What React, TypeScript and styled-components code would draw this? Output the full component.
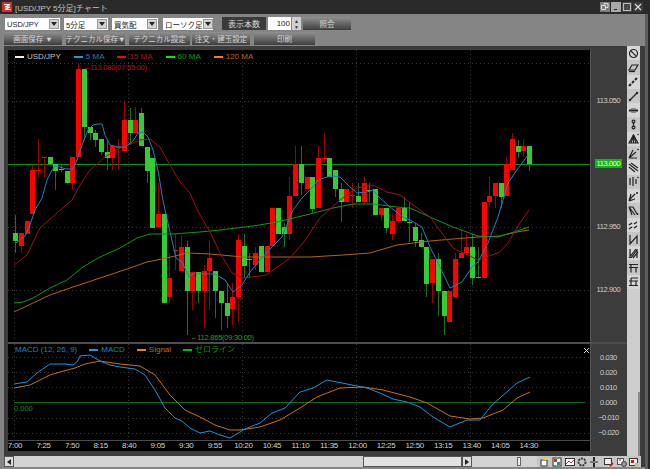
import React from 'react'
import styled, { createGlobalStyle } from 'styled-components'

const GlobalStyle = createGlobalStyle`
  html, body { margin: 0; padding: 0; background: #222; }
  body { font-family: "Liberation Sans", "Noto Sans CJK JP", sans-serif; }
`

const JP = `"Liberation Sans", "Noto Sans CJK JP", sans-serif`

const Window = styled.div`
  width: 650px;
  height: 469px;
  background: #262626;
  overflow: hidden;
  display: flex;
  flex-direction: column;
`

const TitleBar = styled.div`
  height: 14px;
  flex: none;
  display: flex;
  align-items: center;
  padding: 0 7px 0 2px;
  background: #2a2a2a;
  color: #c4c4c4;
  font-size: 8px;
`

const TitleText = styled.span`
  margin-left: 3px;
  flex: 1;
`

const WinBtn = styled.div<{ $bg: string }>`
  width: 10px;
  height: 10px;
  margin-left: 1px;
  background: ${({ $bg }) => $bg};
  display: flex;
  align-items: center;
  justify-content: center;
`

const Content = styled.div`
  width: 648px;
  box-sizing: border-box;
  border-right: 3px solid #5c5c5c;
  flex: 1;
  display: flex;
  flex-direction: column;
  background: #858585;
`

const Toolbar = styled.div`
  height: 32px;
  flex: none;
  padding: 3px 0 0 4px;
  box-sizing: border-box;
  display: flex;
  flex-direction: column;
  gap: 2px;
`

const ToolRow = styled.div`
  display: flex;
  height: 13px;
  align-items: stretch;
`

const SelectBox = styled.div<{ $w: number; $gap: number }>`
  width: ${({ $w }) => $w}px;
  margin-left: ${({ $gap }) => $gap}px;
  margin-top: 1px;
  box-sizing: border-box;
  background: #fff;
  color: #222;
  font-size: 7.5px;
  white-space: nowrap;
  display: flex;
  align-items: center;
  justify-content: space-between;
  padding: 0 1px 0 2px;
`

const SelectArrow = styled.span`
  width: 10px;
  height: 10px;
  flex: none;
  background: #d4d4d4;
  border: 1px solid #999;
  box-sizing: border-box;
  display: flex;
  align-items: center;
  justify-content: center;
`

const CountLabel = styled.div`
  width: 44px;
  margin-left: 9px;
  background: #3a3a3a;
  color: #d8d8d8;
  font-size: 8px;
  display: flex;
  align-items: center;
  justify-content: center;
`

const Spinner = styled.div`
  width: 33px;
  margin-left: 2px;
  display: flex;
  gap: 1px;
`

const SpinValue = styled.div`
  flex: 1;
  background: #fff;
  color: #222;
  font-size: 8px;
  display: flex;
  align-items: center;
  justify-content: flex-end;
  padding-right: 1px;
`

const SpinArrows = styled.div`
  width: 9px;
  background: #d0d0d0;
  color: #333;
  font-size: 5px;
  line-height: 6px;
  display: flex;
  flex-direction: column;
  align-items: center;
  justify-content: center;
`

const GradButton = styled.div<{ $w: number; $gap: number }>`
  width: ${({ $w }) => $w}px;
  margin-left: ${({ $gap }) => $gap}px;
  background: linear-gradient(#909090, #3e3e3e);
  color: #d8d8d8;
  font-size: 7.5px;
  font-family: ${JP};
  display: flex;
  align-items: center;
  justify-content: center;
  white-space: nowrap;
`

const Workspace = styled.div`
  width: 641px;
  height: 421px;
  margin-left: 4px;
  flex: none;
  display: flex;
  flex-direction: column;
  background: #3c3c3c;
`

const MainRow = styled.div`
  height: 410px;
  flex: none;
  display: flex;
  padding: 0 4px 0 4px;
  box-sizing: border-box;
`

const ChartGrid = styled.div`
  margin-top: 4px;
  display: grid;
  grid-template-columns: 582px 37px;
  grid-template-rows: 292px 2px 96px 1px 10px;
  width: 619px;
  height: 401px;
`

const Plot = styled.div`
  position: relative;
  background: #000;
  border-right: 1px solid #555;
  margin-right: -1px;
  svg { display: block; }
`

const PlotDivider = styled.div<{ $full?: boolean }>`
  background: #4c4c4c;
  grid-column: ${({ $full }) => ($full ? '1' : '1 / span 2')};
`

const Legend = styled.div<{ $top: number }>`
  position: absolute;
  top: ${({ $top }) => $top}px;
  left: 7px;
  display: flex;
  align-items: center;
  font-size: 8px;
  line-height: 10px;
  white-space: nowrap;
`

const LegendItem = styled.span<{ $text: string; $gap: number }>`
  display: flex;
  align-items: center;
  gap: 3px;
  color: ${({ $text }) => $text};
  margin-right: ${({ $gap }) => $gap}px;
`

const Swatch = styled.i<{ $c: string }>`
  width: 9px;
  height: 2px;
  background: ${({ $c }) => $c};
`

const AxisColumn = styled.div<{ $pad: number }>`
  padding-top: ${({ $pad }) => $pad}px;
  box-sizing: border-box;
`

const Tick = styled.div<{ $h: number }>`
  height: ${({ $h }) => $h}px;
  display: flex;
  align-items: center;
  justify-content: center;
  color: #cfcfcf;
  font-size: 7.5px;
  letter-spacing: -0.4px;
`

const PriceTag = styled.span`
  width: 27px;
  height: 9px;
  background: #12b512;
  color: #e8ffe8;
  font-size: 7.5px;
  line-height: 9px;
  text-align: center;
`

const XAxisCell = styled.div`
  grid-column: 1;
  background: #000;
  overflow: hidden;
  display: flex;
  border-right: 1px solid #555;
  margin-right: -1px;
`

const XAxisRow = styled.div`
  display: flex;
  margin-left: -7.25px;
  flex: none;
`

const XLabel = styled.span`
  width: 28.55px;
  flex: none;
  text-align: center;
  color: #d4d4d4;
  font-size: 8px;
  line-height: 10px;
  letter-spacing: -0.3px;
`

const SideTools = styled.div`
  width: 13px;
  flex: none;
  position: relative;
  background: #cdcdcd;
  display: flex;
  flex-direction: column;
`

const SideCell = styled.div`
  height: 14.3px;
  flex: none;
  display: flex;
  align-items: center;
  justify-content: center;
  background: #d6d6d6;
  &:nth-child(even) { background: #c6c6c6; }
  svg { display: block; }
`

const SideSliver = styled.span`
  position: absolute;
  right: 0;
  top: 346px;
  width: 2px;
  height: 64px;
  background: #8c8c8c;
`

const BottomBar = styled.div`
  height: 11px;
  flex: none;
  margin-right: 4px;
  display: flex;
  background: #d2d2d2;
`

const ScrollBtn = styled.div`
  width: 10px;
  box-sizing: border-box;
  border: 1px solid #555;
  background: #dcdcdc;
  display: flex;
  align-items: center;
  justify-content: center;
`

const ScrollTrack = styled.div<{ $w: number }>`
  width: ${({ $w }) => $w}px;
  position: relative;
`

const ScrollThumb = styled.div`
  width: 99px;
  box-sizing: border-box;
  border: 1px solid #555;
  background: #e2e2e2;
`

const ZoomKnob = styled.span`
  position: absolute;
  left: 45px;
  top: 1px;
  width: 4px;
  height: 9px;
  box-sizing: border-box;
  border: 1px solid #666;
  background: #eee;
`

const BottomIcons = styled.div`
  flex: 1;
  display: flex;
  align-items: center;
  padding-left: 2px;
  background: #c6c6c6;
`

const BottomIcon = styled.div<{ $gap: number }>`
  width: 10px;
  height: 10px;
  margin-right: ${({ $gap }) => $gap}px;
  svg { display: block; }
`

type C = [number, number, number, number, 'r' | 'g']

const candles: C[] = [
  [233, 241, 215, 253, 'g'], [233, 246, 233, 253, 'r'], [221, 234, 221, 234, 'r'], [170, 214, 165, 214, 'r'],
  [170, 171, 139, 177, 'r'], [157, 158, 157, 177, 'r'], [157, 164, 157, 164, 'g'], [164, 171, 164, 190, 'g'],
  [169, 170, 164, 172, 'g'], [171, 183, 171, 183, 'g'], [157, 183, 157, 190, 'r'], [69, 157, 63, 157, 'r'],
  [69, 127, 69, 140, 'g'], [127, 133, 127, 140, 'g'], [133, 140, 130, 147, 'g'], [139, 152, 139, 155, 'g'],
  [152, 158, 140, 170, 'g'], [146, 158, 146, 170, 'r'], [147, 148, 139, 170, 'r'], [120, 151, 101, 151, 'r'],
  [120, 133, 108, 145, 'g'], [120, 133, 107, 133, 'r'], [113, 146, 108, 146, 'g'], [147, 171, 147, 183, 'g'],
  [158, 228, 158, 228, 'g'], [214, 227, 183, 227, 'r'], [214, 303, 214, 303, 'g'], [278, 297, 253, 303, 'r'],
  [250, 251, 233, 270, 'r'], [247, 271, 235, 271, 'r'], [247, 291, 241, 335, 'g'], [272, 291, 272, 310, 'r'],
  [272, 291, 272, 303, 'g'], [271, 291, 265, 328, 'r'], [258, 271, 240, 310, 'r'], [271, 291, 271, 318, 'g'],
  [291, 303, 291, 330, 'g'], [303, 316, 283, 328, 'g'], [297, 309, 283, 325, 'r'], [240, 297, 234, 322, 'r'],
  [246, 266, 234, 278, 'g'], [259, 260, 253, 278, 'g'], [253, 265, 247, 270, 'r'], [246, 272, 246, 272, 'g'],
  [246, 272, 246, 272, 'r'], [208, 246, 208, 246, 'r'], [208, 234, 208, 234, 'g'], [227, 234, 223, 247, 'g'],
  [196, 234, 177, 240, 'r'], [164, 196, 146, 196, 'r'], [164, 183, 146, 195, 'g'], [177, 189, 177, 189, 'r'],
  [177, 209, 177, 213, 'g'], [158, 208, 146, 208, 'r'], [158, 159, 133, 163, 'r'], [158, 177, 158, 177, 'g'],
  [170, 189, 170, 197, 'g'], [189, 202, 183, 222, 'g'], [189, 202, 189, 202, 'r'], [195, 196, 183, 208, 'r'],
  [196, 202, 183, 202, 'g'], [183, 202, 177, 203, 'r'], [190, 191, 183, 202, 'g'], [189, 215, 189, 215, 'g'],
  [208, 215, 208, 221, 'r'], [208, 228, 208, 233, 'g'], [221, 234, 213, 240, 'r'], [208, 221, 208, 221, 'r'],
  [208, 221, 197, 221, 'g'], [222, 223, 202, 242, 'g'], [227, 241, 223, 247, 'g'], [240, 247, 233, 247, 'g'],
  [247, 284, 247, 297, 'g'], [259, 283, 259, 303, 'r'], [259, 291, 253, 316, 'g'], [291, 316, 291, 335, 'g'],
  [291, 322, 291, 322, 'r'], [259, 297, 253, 297, 'r'], [253, 258, 230, 258, 'r'], [247, 253, 234, 253, 'r'],
  [247, 278, 234, 285, 'g'], [277, 278, 247, 278, 'g'], [202, 278, 202, 278, 'r'], [196, 202, 177, 207, 'r'],
  [183, 196, 183, 208, 'r'], [183, 197, 183, 208, 'g'], [164, 196, 157, 196, 'r'], [139, 170, 133, 170, 'r'],
  [146, 152, 140, 158, 'g'], [146, 151, 139, 157, 'r'], [146, 164, 146, 171, 'g'],
]

const pts = (a: number[][]) => a.map((p) => p.join(',')).join(' ')

const ma5 = pts([[16, 243], [25, 236], [30, 225], [35, 210], [42, 198], [47, 180], [52, 170], [55, 166], [60, 167], [66, 169], [73, 169], [77, 160], [82, 145], [88, 130], [93, 125], [98, 124], [102, 124], [105, 135], [110, 145], [118, 147], [125, 147], [133, 141], [138, 133], [143, 132], [148, 137], [153, 150], [158, 170], [162, 195], [165, 210], [170, 232], [176, 258], [182, 262], [189, 277], [195, 273], [205, 274], [215, 274], [225, 280], [233, 292], [242, 285], [250, 272], [260, 260], [272, 247], [282, 237], [293, 210], [302, 198], [310, 190], [318, 180], [330, 176], [340, 177], [350, 187], [357, 193], [367, 192], [373, 190], [380, 198], [390, 207], [403, 217], [410, 220], [422, 227], [430, 247], [438, 263], [450, 288], [462, 282], [472, 267], [478, 262], [488, 243], [498, 217], [508, 183], [517, 170], [528, 155]])
const ma15 = pts([[14, 265], [27, 255], [40, 228], [58, 212], [72, 200], [80, 185], [90, 170], [105, 157], [120, 148], [130, 144], [140, 140], [150, 139], [160, 147], [170, 165], [180, 182], [190, 193], [195, 205], [200, 215], [210, 232], [220, 253], [232, 273], [243, 278], [267, 275], [273, 270], [290, 258], [303, 243], [320, 218], [340, 200], [357, 188], [373, 185], [387, 192], [400, 195], [413, 205], [430, 217], [453, 248], [478, 260], [500, 252], [508, 243], [520, 223], [529, 210]])
const ma60 = pts([[14, 303], [23, 302], [33, 298], [50, 288], [67, 280], [83, 267], [100, 257], [120, 248], [137, 238], [150, 234], [173, 234], [200, 232], [220, 230], [253, 226], [277, 222], [310, 214], [333, 208], [353, 204], [373, 204], [397, 207], [410, 208], [430, 217], [453, 227], [478, 236], [498, 237], [517, 231], [529, 227]])
const ma120 = pts([[14, 312], [33, 303], [50, 295], [73, 287], [100, 278], [127, 269], [147, 262], [167, 258], [187, 253], [210, 254], [243, 257], [310, 257], [343, 255], [370, 253], [397, 245], [430, 241], [453, 239], [478, 237], [500, 236], [517, 232], [529, 230]])

const macd = pts([[14, 384], [27, 382], [37, 373], [50, 364], [65, 364], [73, 365], [77, 362], [80, 356], [90, 355], [100, 361], [110, 365], [120, 367], [135, 369], [145, 375], [155, 390], [165, 408], [175, 418], [182, 421], [190, 428], [200, 433], [210, 431], [220, 435], [230, 438], [235, 435], [245, 429], [260, 423], [272, 413], [285, 408], [300, 392], [313, 388], [327, 380], [342, 383], [367, 388], [380, 393], [393, 399], [407, 402], [420, 407], [433, 417], [450, 427], [467, 420], [480, 420], [492, 405], [500, 398], [517, 383], [530, 377]])
const signal = pts([[14, 388], [30, 385], [50, 375], [60, 372], [75, 368], [85, 364], [100, 361], [120, 364], [140, 366], [155, 375], [170, 395], [185, 410], [200, 417], [215, 425], [230, 430], [240, 430], [260, 427], [280, 420], [300, 408], [317, 397], [340, 388], [363, 387], [383, 390], [410, 397], [427, 403], [450, 416], [470, 419], [483, 418], [503, 410], [517, 398], [530, 392]])

const xTicks = ['7:00', '7:25', '7:50', '8:15', '8:40', '9:05', '9:30', '9:55', '10:20', '10:45', '11:10', '11:35', '12:00', '12:25', '12:50', '13:15', '13:40', '14:05', '14:30']

const VGrid = ({ y1, y2 }: { y1: number; y2: number }) => (
  <>
    {[14.5, 128.5, 242.5, 356.5, 470.5].map((x) => (
      <line key={x} x1={x} x2={x} y1={y1} y2={y2} stroke="#3a3a3a" strokeDasharray="1 3" />
    ))}
  </>
)

const HGrid = ({ ys }: { ys: number[] }) => (
  <>
    {ys.map((y) => (
      <line key={y} x1={8} x2={590} y1={y} y2={y} stroke="#3a3a3a" strokeDasharray="1 3" />
    ))}
  </>
)

const PriceChart = () => (
  <svg width={582} height={292} viewBox="8 50 582 292">
    <HGrid ys={[63.5, 101.5, 227.5, 290.5]} />
    <VGrid y1={50} y2={342} />
    <line x1={8} x2={590} y1={164.5} y2={164.5} stroke="#0a8f0a" />
    {candles.map(([top, bottom, hi, lo, kind], i) => {
      const x = Math.floor(15.8 + 5.71 * i)
      return (
        <g key={i}>
          <line x1={x + 0.5} x2={x + 0.5} y1={hi} y2={lo} stroke={kind === 'r' ? '#9c0000' : '#1c6f1c'} />
          <rect x={x - 2} y={top} width={5} height={bottom - top} fill={kind === 'r' ? '#ff0000' : '#33cc33'} />
        </g>
      )
    })}
    <polyline points={ma120} fill="none" stroke="#b2650f" />
    <polyline points={ma60} fill="none" stroke="#119a11" />
    <polyline points={ma15} fill="none" stroke="#a01212" />
    <polyline points={ma5} fill="none" stroke="#1b84c4" />
    <text x={83} y={69.5} fill="#b01414" fontSize={7.5} letterSpacing={-0.25}>←113.080(07:55:00)</text>
    <text x={190} y={340} fill="#2a9a3a" fontSize={7.5} letterSpacing={-0.25}>←112.865(09:30:00)</text>
  </svg>
)

const MacdChart = () => (
  <svg width={582} height={96} viewBox="8 344 582 96">
    <HGrid ys={[357.5, 372.5, 387.5, 418.5, 433.5]} />
    <VGrid y1={344} y2={440} />
    <line x1={14} x2={585} y1={402.5} y2={402.5} stroke="#116c11" strokeWidth={1.2} />
    <polyline points={signal} fill="none" stroke="#d0700f" />
    <polyline points={macd} fill="none" stroke="#1a94dc" />
    <text x={14} y={411} fill="#14931a" fontSize={7.5}>0.000</text>
    <path d="M584 348l5 5m0-5l-5 5" stroke="#ccc" fill="none" />
  </svg>
)

const s = { fill: 'none', stroke: '#222', strokeWidth: 1.2 }

const sideIcons = [
  <><circle cx={5.5} cy={5.5} r={4} {...s} /><path d="M2.7 2.7l5.6 5.6" {...s} /></>,
  <><path d="M1 8l3-5h6L7 8z" {...s} /><path d="M1 9.5h6" {...s} /></>,
  <path d="M1 10l2-2m1-1l2-2m1-1l2-2" {...s} strokeWidth={2} />,
  <><path d="M2 9l7-7" {...s} /><circle cx={2} cy={9} r={1.2} fill="#222" /><circle cx={9} cy={2} r={1.2} fill="#222" /></>,
  <><path d="M1 5.5h9" {...s} strokeWidth={2} /><path d="M3 3.5h5M3 7.5h5" {...s} stroke="#888" /></>,
  <><circle cx={5.5} cy={2.5} r={1.4} {...s} /><circle cx={5.5} cy={8.5} r={1.4} {...s} /><path d="M5.5 3.5v4" {...s} /></>,
  <><path d="M1 10L5.5 2 10 10z" {...s} /><path d="M5.5 2v8M3 10l2.5-8M8 10L5.5 2" {...s} /><circle cx={10} cy={1.5} r={0.8} fill="#222" /></>,
  <><path d="M1 10l7-6M1 10l4-8M1 10h8" {...s} /><circle cx={10} cy={1.5} r={0.8} fill="#222" /></>,
  <path d="M1 2l9 7M1 5l6 5M3 1l7 5" {...s} />,
  <><path d="M2 2v7M5 1v9M8 3v5" {...s} /><circle cx={10} cy={1.5} r={0.8} fill="#222" /></>,
  <><path d="M1 10l3-4 3-3M1 10l6-2M1 10l2-7" {...s} /><circle cx={9} cy={2} r={1} fill="#222" /></>,
  <><path d="M1 2h4l4 7M1 2l6 8M1 2l3 8" {...s} /><circle cx={9.5} cy={9} r={0.9} fill="#222" /></>,
  <path d="M1 6l3-2M1 10l3-2M6 5l3-2M6 9l3-2" {...s} strokeWidth={1.4} />,
  <><path d="M2 1v9l7-8v8" {...s} /></>,
  <path d="M1 10L8 1M3 10l6-8M5 10l5-6M2 1v9M9 1v9" {...s} />,
  <path d="M1 2.5h9M1 5.5h9M3 2.5v8M8 5.5v5" {...s} />,
  <path d="M1 9.5h9M3 2h7M3 2v7.5M8 5v4.5M1 5h9" {...s} />,
]

const BottomIconSet = () => {
  const list: [number, React.ReactNode][] = [
    [3, <><rect x={2} y={3} width={6} height={6} fill="#fff" stroke="#333" /><rect x={4} y={0} width={5} height={3} fill="#e8d020" /></>],
    [3, <><rect x={1} y={1} width={8} height={8} fill="#eee" stroke="#333" /><rect x={2} y={2} width={3} height={3} fill="#c03030" /><rect x={5} y={5} width={3} height={3} fill="#2f8a8a" /></>],
    [2, <><rect x={0.5} y={1.5} width={9} height={7} fill="#fff" stroke="#333" /><path d="M1 7l3-3 2 2 3-3" fill="none" stroke="#d03030" /></>],
    [2, <><circle cx={5} cy={5} r={3.5} fill="none" stroke="#333" strokeWidth={2} strokeDasharray="2 1" /></>],
    [5, <><path d="M5 0v10" stroke="#222" strokeWidth={2} /><path d="M1 5h8" stroke="#777" strokeWidth={2} /></>],
    [3, <><rect x={0.5} y={1.5} width={7} height={6} fill="#eee" stroke="#333" /><path d="M6 9l3-3" stroke="#c02020" strokeWidth={2} /></>],
    [2, <><rect x={0.5} y={1.5} width={6} height={6} fill="#eee" stroke="#555" /><circle cx={7} cy={7} r={2.5} fill="#999" stroke="#444" /><path d="M2 3h2" stroke="#c02020" /></>],
    [0, <><rect x={0.5} y={1.5} width={8} height={7} fill="#eee" stroke="#333" /><rect x={2} y={3} width={3} height={3} fill="#c02020" /><rect x={6} y={6} width={3} height={3} fill="#e0c020" /></>],
  ]
  return (
    <BottomIcons>
      {list.map(([gap, g], i) => (
        <BottomIcon key={i} $gap={gap}>
          <svg width={10} height={10} viewBox="0 0 10 10">{g}</svg>
        </BottomIcon>
      ))}
    </BottomIcons>
  )
}

const Arrow = () => (
  <SelectArrow>
    <svg width={6} height={4} viewBox="0 0 6 4"><path d="M0 0h6L3 4z" fill="#222" /></svg>
  </SelectArrow>
)

const selects: [string, number, number][] = [['USD/JPY', 55, 1], ['5分足', 44, 4], ['買気配', 46, 4], ['ローソク足', 50, 5]]
const buttons: [string, number, number][] = [['画面保存 ▼', 58, 0], ['テクニカル保存▼', 59, 4], ['テクニカル設定', 61, 4], ['注文・建玉設定', 58, 2], ['印刷', 61, 4]]

const App = () => (
  <Window>
    <GlobalStyle />
    <TitleBar>
      <svg width={10} height={10} viewBox="0 0 10 10">
        <rect width={10} height={10} fill="#d42a2a" />
        <path d="M2 2.5h6L3 5h5L3 7.5h6" fill="none" stroke="#fff" strokeWidth={1.2} />
      </svg>
      <TitleText>[USD/JPY 5分足]チャート</TitleText>
      <WinBtn $bg="#7d7d7d">
        <svg width={8} height={8} viewBox="0 0 8 8"><path d="M.5 2.5h4v4h-4zM3 2.5V.5h4v4H4.5" fill="none" stroke="#ddd" /></svg>
      </WinBtn>
      <WinBtn $bg="#a8a8a8">
        <svg width={8} height={8} viewBox="0 0 8 8"><path d="M2 6.5h3" stroke="#222" /></svg>
      </WinBtn>
      <WinBtn $bg="#4a4a4a">
        <svg width={8} height={8} viewBox="0 0 8 8"><rect x={0.5} y={0.5} width={7} height={7} fill="none" stroke="#bbb" /></svg>
      </WinBtn>
      <WinBtn $bg="#3a3a3a">
        <svg width={8} height={8} viewBox="0 0 8 8"><path d="M1 1l6 6m0-6L1 7" stroke="#ddd" strokeWidth={1.2} /></svg>
      </WinBtn>
    </TitleBar>
    <Content>
      <Toolbar>
        <ToolRow>
          {selects.map(([label, w, gap]) => (
            <SelectBox key={label} $w={w} $gap={gap}>
              {label}
              <Arrow />
            </SelectBox>
          ))}
          <CountLabel>表示本数</CountLabel>
          <Spinner>
            <SpinValue>100</SpinValue>
            <SpinArrows><span>▲</span><span>▼</span></SpinArrows>
          </Spinner>
          <GradButton $w={48} $gap={2}>照会</GradButton>
        </ToolRow>
        <ToolRow>
          {buttons.map(([label, w, gap]) => (
            <GradButton key={label} $w={w} $gap={gap}>{label}</GradButton>
          ))}
        </ToolRow>
      </Toolbar>
      <Workspace>
        <MainRow>
          <ChartGrid>
            <Plot>
              <PriceChart />
              <Legend $top={2}>
                <LegendItem $text="#c8c8c8" $gap={13}><Swatch $c="#f0f0e0" />USD/JPY</LegendItem>
                <LegendItem $text="#1b84c4" $gap={13}><Swatch $c="#1c9ae0" />5 MA</LegendItem>
                <LegendItem $text="#b01010" $gap={13}><Swatch $c="#ff0000" />15 MA</LegendItem>
                <LegendItem $text="#0aa00a" $gap={13}><Swatch $c="#00ee00" />60 MA</LegendItem>
                <LegendItem $text="#c06a10" $gap={0}><Swatch $c="#f08010" />120 MA</LegendItem>
              </Legend>
            </Plot>
            <AxisColumn $pad={19}>
              <Tick $h={63}>113.050</Tick>
              <Tick $h={63}><PriceTag>113.000</PriceTag></Tick>
              <Tick $h={63}>112.950</Tick>
              <Tick $h={63}>112.900</Tick>
            </AxisColumn>
            <PlotDivider />
            <Plot>
              <MacdChart />
              <Legend $top={1}>
                <LegendItem $text="#1b84c4" $gap={12}>MACD (12, 26, 9)</LegendItem>
                <LegendItem $text="#1b84c4" $gap={12}><Swatch $c="#1c9ae0" />MACD</LegendItem>
                <LegendItem $text="#c06a10" $gap={12}><Swatch $c="#f08010" />Signal</LegendItem>
                <LegendItem $text="#0a9a0a" $gap={0}><Swatch $c="#00c000" />ゼロライン</LegendItem>
              </Legend>
            </Plot>
            <AxisColumn $pad={6}>
              <Tick $h={15}>0.030</Tick>
              <Tick $h={15}>0.020</Tick>
              <Tick $h={15}>0.010</Tick>
              <Tick $h={15}>0.000</Tick>
              <Tick $h={15}>−0.010</Tick>
              <Tick $h={15}>−0.020</Tick>
            </AxisColumn>
            <PlotDivider $full />
            <div />
            <XAxisCell>
              <XAxisRow>
                {xTicks.map((t) => <XLabel key={t}>{t}</XLabel>)}
              </XAxisRow>
            </XAxisCell>
          </ChartGrid>
          <SideTools>
            {sideIcons.map((icon, i) => (
              <SideCell key={i}>
                <svg width={11} height={11} viewBox="0 0 11 11">{icon}</svg>
              </SideCell>
            ))}
            <SideSliver />
          </SideTools>
        </MainRow>
        <BottomBar>
          <ScrollBtn>
            <svg width={4} height={6} viewBox="0 0 4 6"><path d="M4 0v6L0 3z" fill="#222" /></svg>
          </ScrollBtn>
          <ScrollTrack $w={349} />
          <ScrollThumb />
          <ScrollBtn>
            <svg width={4} height={6} viewBox="0 0 4 6"><path d="M0 0v6l4-3z" fill="#222" /></svg>
          </ScrollBtn>
          <ScrollTrack $w={65}><ZoomKnob /></ScrollTrack>
          <BottomIconSet />
        </BottomBar>
      </Workspace>
    </Content>
  </Window>
)

export default App
